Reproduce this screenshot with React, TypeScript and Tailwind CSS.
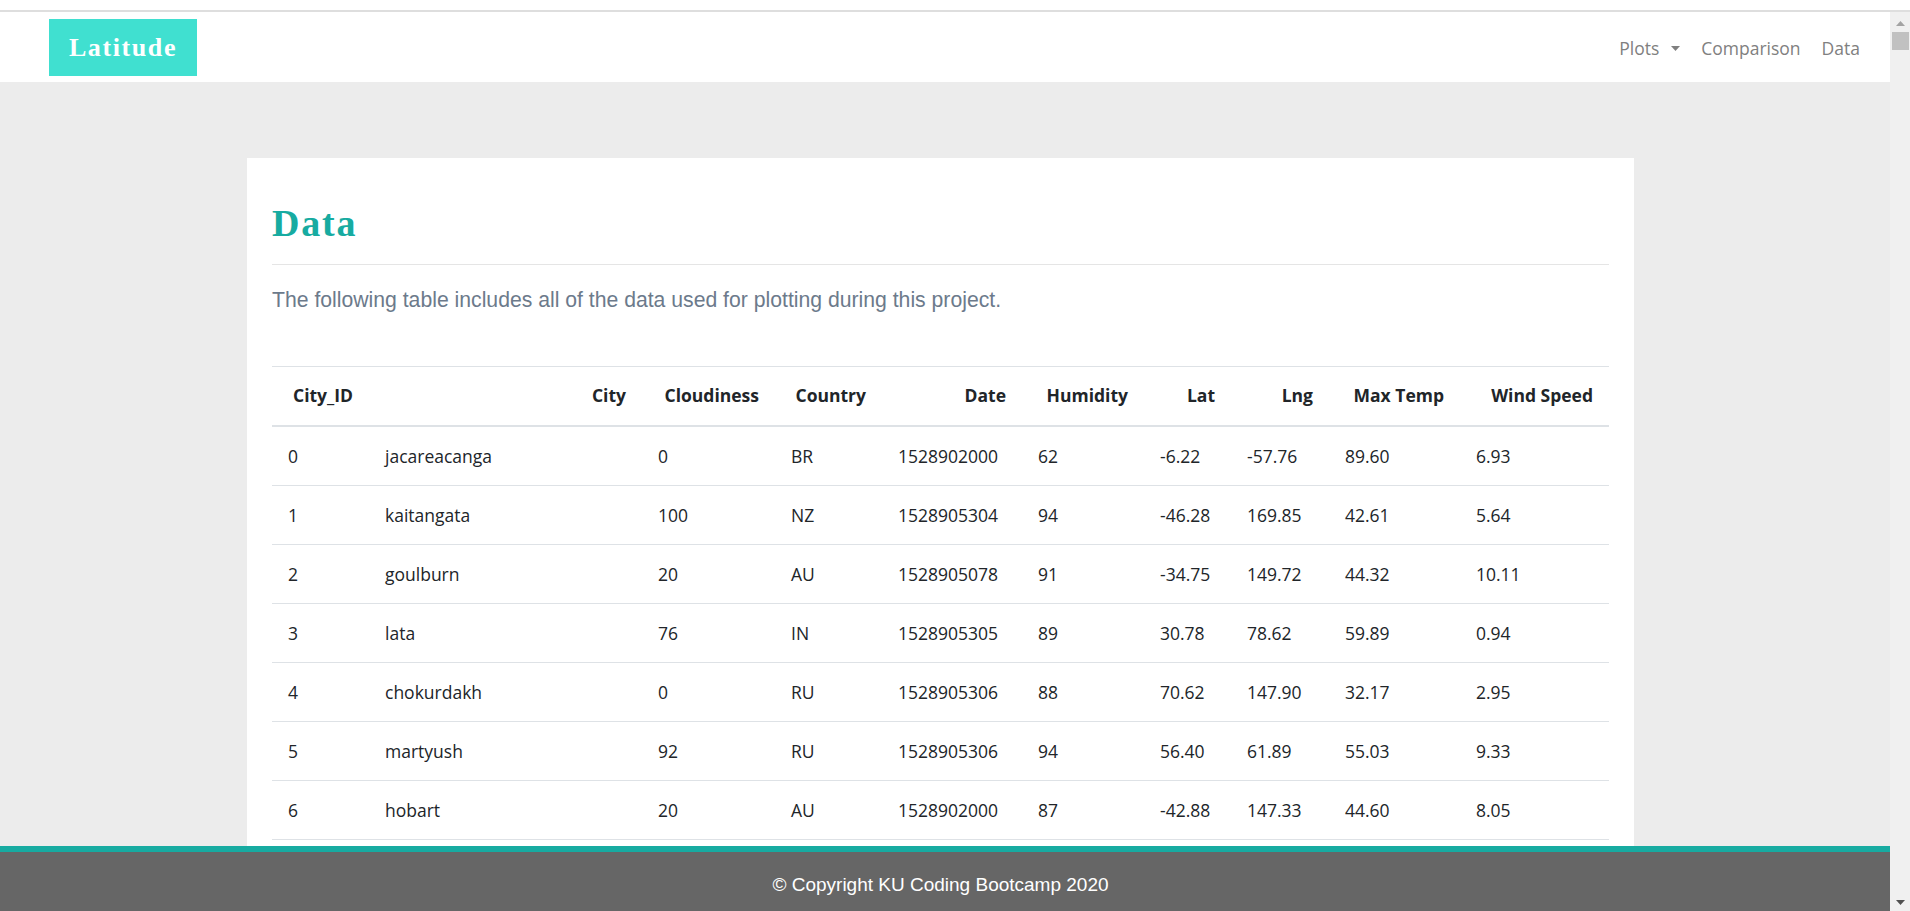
import React from "react";

const rows = [
  ["0", "jacareacanga", "0", "BR", "1528902000", "62", "-6.22", "-57.76", "89.60", "6.93"],
  ["1", "kaitangata", "100", "NZ", "1528905304", "94", "-46.28", "169.85", "42.61", "5.64"],
  ["2", "goulburn", "20", "AU", "1528905078", "91", "-34.75", "149.72", "44.32", "10.11"],
  ["3", "lata", "76", "IN", "1528905305", "89", "30.78", "78.62", "59.89", "0.94"],
  ["4", "chokurdakh", "0", "RU", "1528905306", "88", "70.62", "147.90", "32.17", "2.95"],
  ["5", "martyush", "92", "RU", "1528905306", "94", "56.40", "61.89", "55.03", "9.33"],
  ["6", "hobart", "20", "AU", "1528902000", "87", "-42.88", "147.33", "44.60", "8.05"],
];

const headers = ["City_ID", "City", "Cloudiness", "Country", "Date", "Humidity", "Lat", "Lng", "Max Temp", "Wind Speed"];
const colWidths = [97, 273, 133, 107, 140, 122, 87, 98, 131, 149];

const Navbar = () => {
  return (
    <nav className="h-[70px] bg-white flex flex-row justify-between items-center pl-[49px] pr-[30px]">
      <div className="h-[57px] w-[148px] bg-[#40e0d0] flex items-center justify-center pt-[2px]">
        <span className="font-['Liberation_Serif',serif] font-bold text-[26px] tracking-[1.6px] text-white leading-none">
          Latitude
        </span>
      </div>
      <div className="flex flex-row items-center gap-[21px] pt-[3px] font-['Open_Sans',sans-serif] text-[17.5px] text-[#808080]">
        <div className="flex flex-row items-center">
          <span>Plots</span>
          <svg className="ml-[12px] w-[9px] h-[5px]" viewBox="0 0 9 5">
            <polygon points="0,0 9,0 4.5,5" fill="#808080" />
          </svg>
        </div>
        <span>Comparison</span>
        <span>Data</span>
      </div>
    </nav>
  );
};

const DataTable = () => {
  return (
    <table className="w-full table-fixed border-separate border-spacing-0 font-['Open_Sans',sans-serif] text-[17.5px] text-[#212529]">
      <colgroup>
        {colWidths.map((w, i) => (
          <col key={i} style={{ width: w }} />
        ))}
      </colgroup>
      <thead>
        <tr>
          {headers.map((h) => (
            <th
              key={h}
              className="text-right font-bold leading-[27px] px-4 py-[15.5px] border-t border-b-2 border-[#dee2e6] whitespace-nowrap"
            >
              {h}
            </th>
          ))}
        </tr>
      </thead>
      <tbody>
        {rows.map((r) => (
          <tr key={r[0]}>
            {r.map((v, i) => (
              <td key={i} className="text-left leading-[27px] px-4 pt-[16.5px] pb-[14.5px] border-b border-[#dee2e6] whitespace-nowrap">
                {v}
              </td>
            ))}
          </tr>
        ))}
      </tbody>
    </table>
  );
};

const Scrollbar = () => {
  return (
    <div className="w-[20px] bg-[#f0f0f0] flex flex-col items-center">
      <div className="h-[20px] pt-[3px] flex items-center justify-center">
        <svg className="w-[9px] h-[5px]" viewBox="0 0 9 5">
          <polygon points="0,5 9,5 4.5,0" fill="#a3a3a3" />
        </svg>
      </div>
      <div className="w-[17px] h-[18px] bg-[#c1c1c1]" />
      <div className="flex-1" />
      <div className="h-[17px] pb-[1px] flex items-center justify-center">
        <svg className="w-[9px] h-[5px]" viewBox="0 0 9 5">
          <polygon points="0,0 9,0 4.5,5" fill="#505050" />
        </svg>
      </div>
    </div>
  );
};

export default function App() {
  return (
    <div className="h-[911px] w-full overflow-hidden flex flex-col bg-white">
      <div className="h-[12px] bg-white border-b-2 border-[#dedede]" />
      <div className="flex-1 flex flex-row min-h-0">
        <div className="flex-1 flex flex-col min-w-0">
          <Navbar />
          <main className="flex-1 min-h-0 overflow-hidden bg-[#ececec] pt-[76px]">
            <div className="ml-[247px] w-[1387px] bg-white px-[25px] pt-[46px] pb-[60px]">
              <h1 className="font-['Liberation_Serif',serif] font-bold text-[38px] tracking-[1.8px] leading-none text-[#17aba1]">
                Data
              </h1>
              <hr className="mt-[22px] border-t border-[#e5e5e5]" />
              <p className="mt-[19px] font-['Liberation_Sans',sans-serif] text-[21.2px] leading-[31.5px] text-[#6c7a8b]">
                The following table includes all of the data used for plotting during this project.
              </p>
              <div className="mt-[50px]">
                <DataTable />
              </div>
            </div>
          </main>
          <footer className="h-[65px] border-t-[6px] border-[#17aba1] bg-[#666666] flex items-center justify-center pr-[9px] pt-[7px]">
            <span className="font-['Liberation_Sans',sans-serif] text-[19px] text-white">
              © Copyright KU Coding Bootcamp 2020
            </span>
          </footer>
        </div>
        <Scrollbar />
      </div>
    </div>
  );
}
